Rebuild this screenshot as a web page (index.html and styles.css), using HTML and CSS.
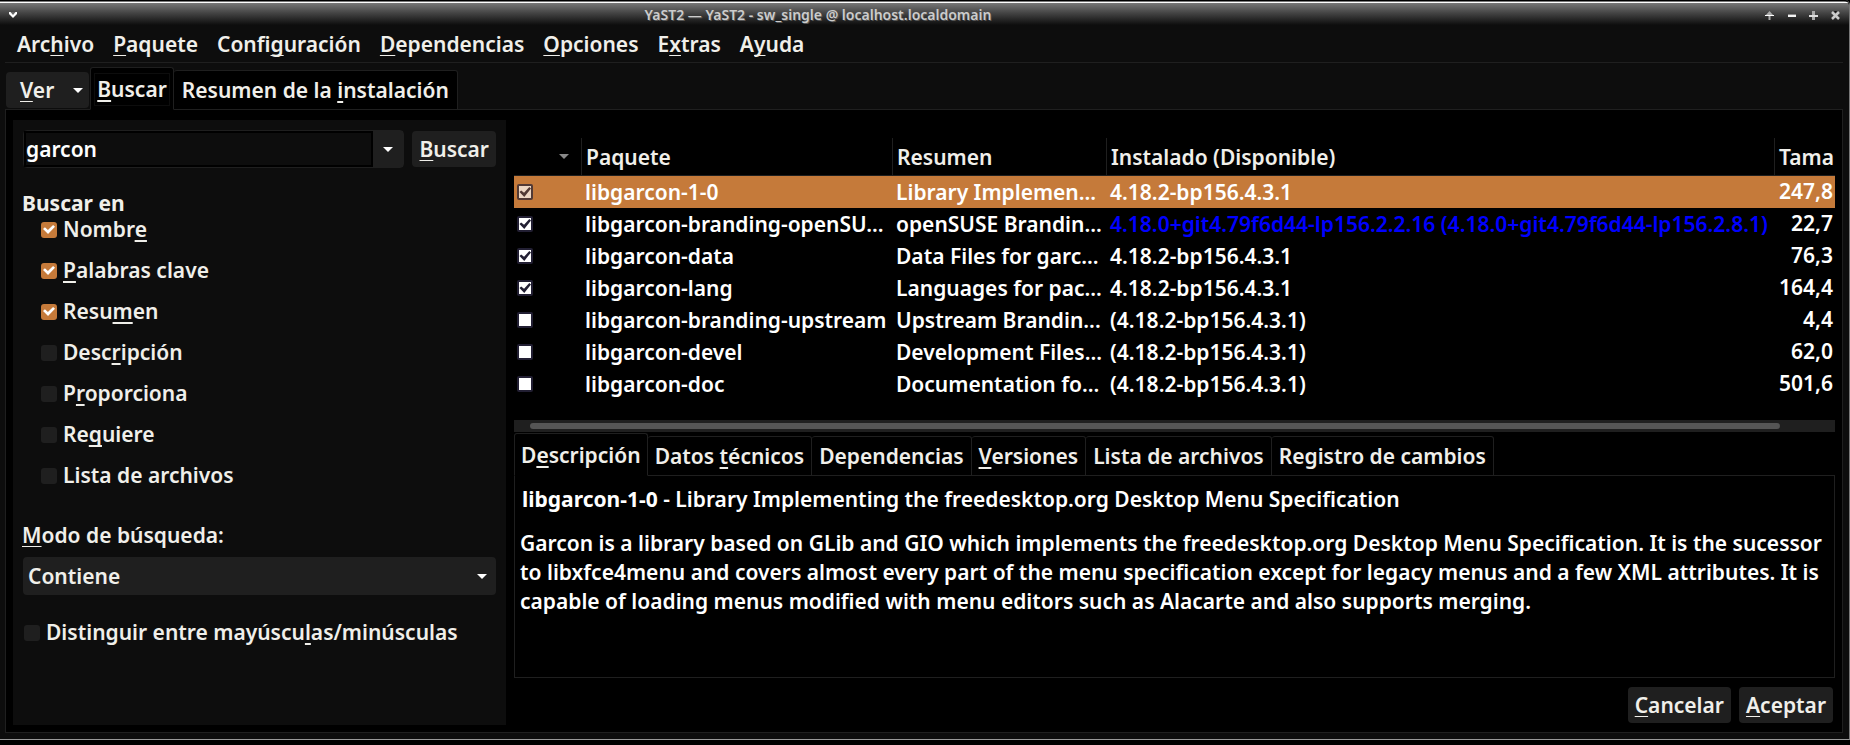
FILE: index.html
```
<!DOCTYPE html>
<html lang="es">
<head>
<meta charset="utf-8">
<title>YaST2 — YaST2 - sw_single @ localhost.localdomain</title>
<link rel="stylesheet" href="styles.css">
</head>
<body>
<div class="window">
  <header class="titlebar">
    <button class="tb-btn" aria-label="Menú de la ventana"><svg width="10" height="8" viewBox="0 0 10 8"><path d="M1 1h8v2L5 7 1 3z" fill="#fff"/><path d="M2.500 1h5L5 4z" fill="#666"/></svg></button>
    <h1 class="title">YaST2 — YaST2 - sw_single @ localhost.localdomain</h1>
    <button class="tb-btn" aria-label="Enrollar"><svg width="9" height="9" viewBox="0 0 9 9"><path d="M4.500 0L8.500 4.500H5.500V9h-2V4.500H.5z" fill="#aaa"/><path d="M0 4h9v1H0z" fill="#fff"/></svg></button>
    <button class="tb-btn" aria-label="Minimizar"><svg width="9" height="9" viewBox="0 0 9 9"><path d="M1 3h8v1H1z" fill="#888"/><path d="M1 4h8v2H1z" fill="#f4f4f4"/></svg></button>
    <button class="tb-btn" aria-label="Maximizar"><svg width="9" height="9" viewBox="0 0 9 9"><path d="M3 0h3v9H3z" fill="#aaa"/><path d="M0 4h9v2H0z" fill="#ddd"/></svg></button>
    <button class="tb-btn" aria-label="Cerrar"><svg width="9" height="9" viewBox="0 0 9 9"><path d="M1 1l7 7M8 1L1 8" stroke="#ccc" stroke-width="2.500"/><path d="M3 0h3L4.500 2z" fill="#111"/></svg></button>
  </header>

  <nav class="menubar">
    <button>Arc<u>h</u>ivo</button>
    <button><u>P</u>aquete</button>
    <button>Confi<u>g</u>uración</button>
    <button><u>D</u>ependencias</button>
    <button><u>O</u>pciones</button>
    <button>E<u>x</u>tras</button>
    <button>A<u>y</u>uda</button>
  </nav>

  <div class="viewbar">
    <button class="view-btn"><span><u>V</u>er</span><svg class="caret" width="10" height="5" viewBox="0 0 10 5"><path d="M0 0h10L5 5z"/></svg></button>
    <div class="tabs" role="tablist">
      <button class="tab active focused" role="tab" aria-selected="true"><span><u>B</u>uscar</span></button>
      <button class="tab" role="tab" aria-selected="false"><span>Resumen de la <u>i</u>nstalación</span></button>
    </div>
  </div>

  <main class="pane">
    <form class="search">
      <div class="query">
        <div class="combo">
          <input type="text" value="garcon" aria-label="Texto de búsqueda">
          <button type="button" aria-label="Búsquedas anteriores"><svg class="caret" width="10" height="5" viewBox="0 0 10 5"><path d="M0 0h10L5 5z"/></svg></button>
        </div>
        <button type="button" class="btn"><span><u>B</u>uscar</span></button>
      </div>
      <fieldset class="fields">
        <legend>Buscar en</legend>
        <label><input type="checkbox" checked><span>Nombr<u>e</u></span></label>
        <label><input type="checkbox" checked><span><u>P</u>alabras clave</span></label>
        <label><input type="checkbox" checked><span>Resu<u>m</u>en</span></label>
        <label><input type="checkbox"><span>Desc<u>r</u>ipción</span></label>
        <label><input type="checkbox"><span>P<u>r</u>oporciona</span></label>
        <label><input type="checkbox"><span>Re<u>q</u>uiere</span></label>
        <label><input type="checkbox"><span>Lista de archivos</span></label>
      </fieldset>
      <label class="mode-label" for="mode"><u>M</u>odo de búsqueda:</label>
      <div class="select">
        <select id="mode"><option>Contiene</option></select>
        <svg class="caret" width="10" height="5" viewBox="0 0 10 5"><path d="M0 0h10L5 5z"/></svg>
      </div>
      <label class="case"><input type="checkbox"><span>Distinguir entre mayúscu<u>l</u>as/minúsculas</span></label>
    </form>

    <section class="results">
      <div class="list">
        <table>
          <colgroup><col class="c-state"><col class="c-name"><col class="c-sum"><col><col class="c-size"></colgroup>
          <thead>
            <tr>
              <th aria-label="Estado" class="sort"><svg width="10" height="5" viewBox="0 0 10 5"><path d="M0 0h10L5 5z"/></svg></th>
              <th>Paquete</th><th>Resumen</th><th>Instalado (Disponible)</th><th>Tama</th>
            </tr>
          </thead>
          <tbody>
            <tr class="selected"><td><input type="checkbox" checked aria-label="libgarcon-1-0"></td><td>libgarcon-1-0</td><td>Library Implemen...</td><td>4.18.2-bp156.4.3.1</td><td>247,8</td></tr>
            <tr class="update"><td><input type="checkbox" checked aria-label="libgarcon-branding-openSUSE"></td><td>libgarcon-branding-openSU...</td><td>openSUSE Brandin...</td><td>4.18.0+git4.79f6d44-lp156.2.2.16 (4.18.0+git4.79f6d44-lp156.2.8.1)</td><td>22,7</td></tr>
            <tr><td><input type="checkbox" checked aria-label="libgarcon-data"></td><td>libgarcon-data</td><td>Data Files for garc...</td><td>4.18.2-bp156.4.3.1</td><td>76,3</td></tr>
            <tr><td><input type="checkbox" checked aria-label="libgarcon-lang"></td><td>libgarcon-lang</td><td>Languages for pac...</td><td>4.18.2-bp156.4.3.1</td><td>164,4</td></tr>
            <tr><td><input type="checkbox" aria-label="libgarcon-branding-upstream"></td><td>libgarcon-branding-upstream</td><td>Upstream Brandin...</td><td>(4.18.2-bp156.4.3.1)</td><td>4,4</td></tr>
            <tr><td><input type="checkbox" aria-label="libgarcon-devel"></td><td>libgarcon-devel</td><td>Development Files...</td><td>(4.18.2-bp156.4.3.1)</td><td>62,0</td></tr>
            <tr><td><input type="checkbox" aria-label="libgarcon-doc"></td><td>libgarcon-doc</td><td>Documentation fo...</td><td>(4.18.2-bp156.4.3.1)</td><td>501,6</td></tr>
          </tbody>
        </table>
      </div>
      <div class="scrollbar"><div class="thumb"></div></div>

      <div class="tabs detail-tabs" role="tablist">
        <button class="tab active" role="tab" aria-selected="true"><span>D<u>e</u>scripción</span></button>
        <button class="tab" role="tab" aria-selected="false"><span>Datos <u>t</u>écnicos</span></button>
        <button class="tab" role="tab" aria-selected="false"><span>Dependencias</span></button>
        <button class="tab" role="tab" aria-selected="false"><span><u>V</u>ersiones</span></button>
        <button class="tab" role="tab" aria-selected="false"><span>Lista de archivos</span></button>
        <button class="tab" role="tab" aria-selected="false"><span>Registro de cambios</span></button>
      </div>
      <article class="detail">
        <p class="detail-title"><b>libgarcon-1-0</b> - Library Implementing the freedesktop.org Desktop Menu Specification</p>
        <p>Garcon is a library based on GLib and GIO which implements the freedesktop.org Desktop Menu Specification. It is the sucessor to libxfce4menu and covers almost every part of the menu specification except for legacy menus and a few XML attributes. It is capable of loading menus modified with menu editors such as Alacarte and also supports merging.</p>
      </article>
      <footer class="actions">
        <button class="btn"><span><u>C</u>ancelar</span></button>
        <button class="btn"><span><u>A</u>ceptar</span></button>
      </footer>
    </section>
  </main>
</div>
</body>
</html>
```
FILE: styles.css
```
* { box-sizing: border-box; }

body {
  margin: 0;
  min-height: 100vh;
  padding: 0 0 5px;
  display: flex;
  background: #000;
  color: #f0efea;
  font: 600 21px/29px "Noto Sans", sans-serif;
}

button, input, select {
  margin: 0;
  padding: 0;
  border: 0;
  background: none;
  color: inherit;
  font: inherit;
}

button, label, th, td { white-space: nowrap; }

u {
  text-decoration: underline 1px;
  text-underline-offset: 3px;
  text-decoration-skip-ink: none;
}

.window {
  flex: 1;
  min-width: 0;
  display: flex;
  flex-direction: column;
  background: #0d0d0d;
  border-right: 1px solid #777;
  border-bottom: 1px solid #999;
  border-top-right-radius: 5px;
}

/* Title bar */
.titlebar {
  display: flex;
  align-items: center;
  height: 25px;
  padding: 4px 3px 0 2px;
  border-top: 1px solid #000;
  border-top-right-radius: 5px;
  background: linear-gradient(#777 0 1px, #fff 1px 2px, #777 2px, #444 50%, #0d0d0d);
}

.title {
  flex: 1;
  margin: 0;
  padding-right: 146px;
  text-align: center;
  font-size: 14px;
  font-weight: 600;
  line-height: 20px;
  color: #ccc;
  text-shadow: 1px 1px 0 #555;
}

.tb-btn {
  width: 22px;
  height: 20px;
  display: flex;
  align-items: center;
  justify-content: center;
}

/* Menu bar */
.menubar {
  display: flex;
  gap: 19px;
  margin: 0 6px 0 5px;
  padding: 5px 12px 3px;
  border-bottom: 1px solid #1f1f1f;
}

/* Top tabs */
.viewbar {
  display: flex;
  align-items: flex-end;
  padding: 4px 6px 0;
}

.view-btn {
  height: 36px;
  margin-bottom: 1px;
  padding: 0 6px 0 14px;
  display: flex;
  align-items: center;
  gap: 19px;
  border-radius: 4px;
  background: #1f1f1f;
}

.caret { fill: #fff; flex: none; }

.tabs {
  display: flex;
  align-items: flex-end;
  position: relative;
  z-index: 1;
  margin-bottom: -1px;
}

.tab {
  height: 40px;
  padding: 0 7px;
  border: 1px solid #1f1f1f;
  border-left-width: 0;
  border-radius: 3px 3px 0 0;
  background: #000;
}

.tab.active {
  height: 43px;
  padding: 1px 6px 0;
  border-left-width: 1px;
  border-bottom-color: #000;
}

.tab.active.focused {
  padding: 1px 3px 0;
}

.tab.focused span {
  display: block;
  padding: 1px 2px;
  border: 1px solid #0d0d0d;
}

.viewbar .tabs { margin-left: 1px; }
.viewbar .tab:not(.active) { padding: 0 8px; }

.tab u { text-decoration-thickness: 2px; }

.pane {
  flex: 1;
  display: flex;
  gap: 8px;
  margin: 0 6px 6px 5px;
  padding: 10px 7px 7px;
  border: 1px solid #1f1f1f;
  background: #000;
}

/* Search panel */
.search {
  flex: 0 0 493px;
  display: flex;
  flex-direction: column;
  padding: 10px;
  background: #0d0d0d;
}

.query {
  display: flex;
  align-items: center;
  gap: 8px;
}

.combo {
  flex: 1;
  min-width: 0;
  display: flex;
  height: 38px;
  border: 1px solid #1f1f1f;
  border-radius: 4px;
  background: #0d0d0d;
}

.combo input {
  flex: 1;
  min-width: 0;
  border: 2px solid #000;
  color: #fff;
  outline: none;
}

.combo button {
  width: 30px;
  display: flex;
  align-items: center;
  justify-content: center;
  background: #1f1f1f;
}

.btn {
  height: 36px;
  padding: 0 7px;
  border-radius: 4px;
  background: #1f1f1f;
}

.fields {
  display: flex;
  flex-direction: column;
  gap: 12px;
  min-width: 0;
  margin: 23px 0 0;
  padding: 0 0 0 18px;
  border: 0;
}

.fields legend {
  margin-left: -19px;
  padding: 0;
  line-height: 24px;
  font-weight: 700;
}

.fields label, .case {
  display: flex;
  align-items: center;
  gap: 6px;
}

.fields u, .case u { text-decoration-thickness: 2px; }

.search input[type="checkbox"] {
  appearance: none;
  flex: none;
  width: 16px;
  height: 16px;
  display: grid;
  place-items: center;
  border-radius: 3px;
  background: #1f1f1f;
}

.search input[type="checkbox"]:checked { background: #c57a3a; }

.search input:checked::before {
  content: "";
  width: 12px;
  height: 10px;
  background: #fff;
  clip-path: polygon(0 45%, 16% 28%, 41% 55%, 84% 5%, 100% 22%, 42% 94%);
}

.mode-label { margin: 31px 0 0 -1px; }

.select {
  position: relative;
  margin-top: 7px;
}

.select select {
  appearance: none;
  width: 100%;
  height: 38px;
  padding: 0 5px;
  border-radius: 4px;
  background: #1f1f1f;
}

.select .caret {
  position: absolute;
  right: 9px;
  top: 17px;
  pointer-events: none;
}

.case { margin: 23px 0 0 1px; }

/* Results */
.results {
  flex: 1;
  min-width: 0;
  display: flex;
  flex-direction: column;
}

.list {
  min-height: 300px;
  padding-top: 18px;
  overflow: hidden;
  color: #fff;
}

table {
  width: 100%;
  table-layout: fixed;
  border-collapse: separate;
  border-spacing: 0;
}

.c-state { width: 68px; }
.c-name { width: 311px; }
.c-sum { width: 214px; }
.c-size { width: 60px; }

th {
  height: 38px;
  padding: 2px 4px 0;
  border-bottom: 1px solid #1f1f1f;
  border-right: 1px solid #1f1f1f;
  text-align: left;
  font-weight: 600;
  color: #f0efea;
}

th:last-child { border-right: 0; }

.sort { text-align: right; padding: 0 12px 8px; line-height: 10px; }
.sort svg { fill: #888; }

td {
  height: 32px;
  padding: 0 3px;
}

td:last-child {
  padding: 0 2px 2px 0;
  text-align: right;
}

.selected td { background: #c57a3a; }
.update td:nth-child(4) { color: #00f; }

td input {
  appearance: none;
  display: grid;
  place-items: center;
  width: 16px;
  height: 16px;
  border: 2px solid #221f33;
  border-radius: 2px;
  background: #fff;
}

td input:checked::before {
  content: "";
  width: 12px;
  height: 10px;
  background: #221f33;
  clip-path: polygon(4% 50%, 18% 34%, 42% 58%, 86% 0, 100% 14%, 44% 100%);
}

.selected td input { opacity: 0.7; }

.scrollbar {
  height: 12px;
  padding: 3px 55px 3px 16px;
  background: #1f1f1f;
}

.thumb {
  height: 6px;
  border-radius: 3px;
  background: #555;
}

.detail-tabs { margin-top: 1px; }

.detail {
  flex: 1;
  padding: 9px 6px 9px 5px;
  border: 1px solid #1f1f1f;
  color: #fff;
}

.detail p { margin: 0; }
.detail .detail-title { margin: 0 2px 15px; }
.detail b { font-weight: 700; }

.actions {
  display: flex;
  justify-content: flex-end;
  gap: 8px;
  padding: 9px 2px 2px;
}
```
